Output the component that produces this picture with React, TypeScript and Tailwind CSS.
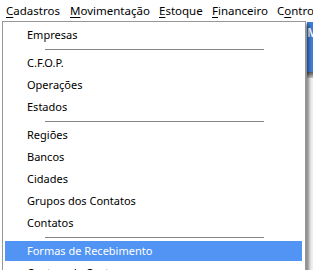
const menus = [
  { label: 'Cadastros', key: 0, w: 'w-[64px]' },
  { label: 'Movimentação', key: 0, w: 'w-[89px]' },
  { label: 'Estoque', key: 0, w: 'w-[53px]' },
  { label: 'Financeiro', key: 0, w: 'w-[65px]' },
  { label: 'Controle', key: 1, w: 'w-[60px]' },
];

type Entry = { label: string; active?: boolean } | 'sep';

const entries: Entry[] = [
  { label: 'Empresas' },
  'sep',
  { label: 'C.F.O.P.' },
  { label: 'Operações' },
  { label: 'Estados' },
  'sep',
  { label: 'Regiões' },
  { label: 'Bancos' },
  { label: 'Cidades' },
  { label: 'Grupos dos Contatos' },
  { label: 'Contatos' },
  'sep',
  { label: 'Formas de Recebimento', active: true },
  { label: 'Centros de Custo' },
];

function MenuLabel({ label, index }: { label: string; index: number }) {
  return (
    <span>
      {label.slice(0, index)}
      <span className="underline underline-offset-2">{label[index]}</span>
      {label.slice(index + 1)}
    </span>
  );
}

export default function App() {
  return (
    <div
      className="relative h-[270px] w-[313px] overflow-hidden bg-white text-[11px] text-black"
      style={{ fontFamily: '"Noto Sans", "DejaVu Sans", sans-serif' }}
    >
      {/* menu bar */}
      <div className="flex h-[21px] items-center whitespace-nowrap pl-[1px] text-[11.5px]">
        {menus.map((m) => (
          <div key={m.label} className={`${m.w} shrink-0 pl-[5px] leading-[21px]`}>
            <MenuLabel label={m.label} index={m.key} />
          </div>
        ))}
      </div>

      {/* window behind the menu */}
      <div className="flex">
        <div className="flex-1" />
        <div className="w-[6px]">
          <div className="mt-[1px] h-[50px] overflow-hidden bg-[#3f7fdb] pt-[4px] text-[12px] font-semibold leading-[14px] text-white">
            M
          </div>
          <div className="h-[6px] bg-gradient-to-b from-[#5a5a5a] to-[#c8c8c8]" />
          <div className="h-[200px] bg-[#f0f0f0]" />
        </div>
      </div>

      {/* dropdown */}
      <div className="absolute left-[2px] top-[21px] w-[304px] border border-[#979797] bg-white px-[2px] pt-[2px] shadow-[3px_3px_3px_rgba(0,0,0,0.45)]">
        {entries.map((e, i) =>
          e === 'sep' ? (
            <div key={i} className="flex h-[6px] items-center pl-[40px] pr-[39px]">
              <div className="h-px w-full bg-[#858585]" />
            </div>
          ) : (
            <div key={i} className="py-[1px] pr-[1px]">
              <div
                className={`h-[20px] whitespace-nowrap pl-[22px] leading-[20px] ${
                  e.active ? 'bg-[#5194f3] text-white' : ''
                }`}
              >
                {e.label}
              </div>
            </div>
          )
        )}
      </div>
    </div>
  );
}
